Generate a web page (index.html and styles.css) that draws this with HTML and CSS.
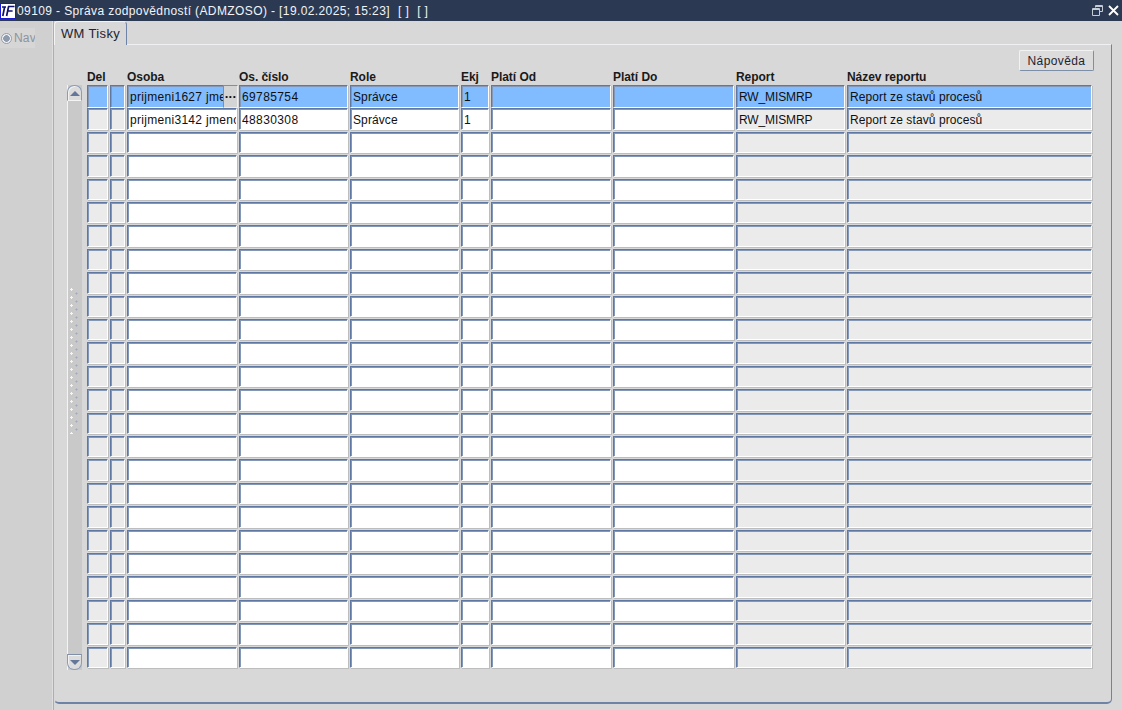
FILE: index.html
```html
<!DOCTYPE html>
<html lang="cs">
<head>
<meta charset="utf-8">
<title>09109 - Správa zodpovědností</title>
<link rel="stylesheet" href="styles.css">
</head>
<body>
<div class="app">
  <header class="titlebar">
    <svg class="logo" width="16" height="16" viewBox="0 0 16 16"><rect x="0.5" y="0.5" width="15" height="15" fill="#fff" stroke="#1a1ad0"/><path d="M2 4h4M4.6 4L2.8 13M8 3.5h6.5M8.6 3.5L6.6 13M7.6 8h5" fill="none" stroke="#10106e" stroke-width="1.7"/></svg>
    <span class="title">09109 - Správa zodpovědností (ADMZOSO) - [19.02.2025; 15:23]<span class="bk">[ ]</span><span class="bk">[ ]</span></span>
    <span class="winctl">
      <svg width="11" height="11" viewBox="0 0 11 11"><path d="M3.5 2.5V.5h7v6h-3M.5 3.5h7v7h-7zM.5 4.5h7M3.5 1.5h7" fill="none" stroke="#c4ccd8"/></svg>
      <svg width="11" height="11" viewBox="0 0 11 11"><path d="M1 1l9 9M10 1L1 10" fill="none" stroke="#fff" stroke-width="1.8"/></svg>
    </span>
  </header>
  <div class="content">
    <aside class="nav">
      <div class="navitem"><span class="radio"></span><span class="navlabel">Nav</span></div>
    </aside>
    <main class="main">
      <div class="tabs"><div class="tab">WM Tisky</div></div>
      <section class="panel">
        <div class="toolbar"><button class="help">Nápověda</button></div>
        <div class="heads">
          <span>Del</span><span></span><span>Osoba</span><span>Os. číslo</span><span>Role</span><span>Ekj</span><span>Platí Od</span><span>Platí Do</span><span>Report</span><span>Název reportu</span>
        </div>
        <div class="tablewrap">
          <div class="scroll">
            <div class="sbtn up"><svg width="10" height="5" viewBox="0 0 10 5"><path d="M5 0l5 5H0z" fill="#64769a"/></svg></div>
            <div class="grip"></div>
            <div class="sbtn down"><svg width="10" height="5" viewBox="0 0 10 5"><path d="M5 5L0 0h10z" fill="#64769a"/></svg></div>
          </div>
          <div class="rows">
            <div class="row sel"><i class="c"></i><i class="c"></i><div class="c lov"><span class="t">prijmeni1627 jmeno</span><b class="dots">···</b></div><div class="c wide">69785754</div><div class="c">Správce</div><div class="c">1</div><i class="c"></i><i class="c"></i><div class="c code">RW_MISMRP</div><div class="c">Report ze stavů procesů</div></div>
            <div class="row"><i class="c g"></i><i class="c g"></i><div class="c"><span class="t">prijmeni3142 jmeno</span></div><div class="c wide">48830308</div><div class="c">Správce</div><div class="c">1</div><i class="c"></i><i class="c"></i><div class="c g code">RW_MISMRP</div><div class="c g">Report ze stavů procesů</div></div>
            <div class="row"><i class="c g"></i><i class="c g"></i><i class="c"></i><i class="c"></i><i class="c"></i><i class="c"></i><i class="c"></i><i class="c"></i><i class="c g"></i><i class="c g"></i></div>
            <div class="row"><i class="c g"></i><i class="c g"></i><i class="c"></i><i class="c"></i><i class="c"></i><i class="c"></i><i class="c"></i><i class="c"></i><i class="c g"></i><i class="c g"></i></div>
            <div class="row"><i class="c g"></i><i class="c g"></i><i class="c"></i><i class="c"></i><i class="c"></i><i class="c"></i><i class="c"></i><i class="c"></i><i class="c g"></i><i class="c g"></i></div>
            <div class="row"><i class="c g"></i><i class="c g"></i><i class="c"></i><i class="c"></i><i class="c"></i><i class="c"></i><i class="c"></i><i class="c"></i><i class="c g"></i><i class="c g"></i></div>
            <div class="row"><i class="c g"></i><i class="c g"></i><i class="c"></i><i class="c"></i><i class="c"></i><i class="c"></i><i class="c"></i><i class="c"></i><i class="c g"></i><i class="c g"></i></div>
            <div class="row"><i class="c g"></i><i class="c g"></i><i class="c"></i><i class="c"></i><i class="c"></i><i class="c"></i><i class="c"></i><i class="c"></i><i class="c g"></i><i class="c g"></i></div>
            <div class="row"><i class="c g"></i><i class="c g"></i><i class="c"></i><i class="c"></i><i class="c"></i><i class="c"></i><i class="c"></i><i class="c"></i><i class="c g"></i><i class="c g"></i></div>
            <div class="row"><i class="c g"></i><i class="c g"></i><i class="c"></i><i class="c"></i><i class="c"></i><i class="c"></i><i class="c"></i><i class="c"></i><i class="c g"></i><i class="c g"></i></div>
            <div class="row"><i class="c g"></i><i class="c g"></i><i class="c"></i><i class="c"></i><i class="c"></i><i class="c"></i><i class="c"></i><i class="c"></i><i class="c g"></i><i class="c g"></i></div>
            <div class="row"><i class="c g"></i><i class="c g"></i><i class="c"></i><i class="c"></i><i class="c"></i><i class="c"></i><i class="c"></i><i class="c"></i><i class="c g"></i><i class="c g"></i></div>
            <div class="row"><i class="c g"></i><i class="c g"></i><i class="c"></i><i class="c"></i><i class="c"></i><i class="c"></i><i class="c"></i><i class="c"></i><i class="c g"></i><i class="c g"></i></div>
            <div class="row"><i class="c g"></i><i class="c g"></i><i class="c"></i><i class="c"></i><i class="c"></i><i class="c"></i><i class="c"></i><i class="c"></i><i class="c g"></i><i class="c g"></i></div>
            <div class="row"><i class="c g"></i><i class="c g"></i><i class="c"></i><i class="c"></i><i class="c"></i><i class="c"></i><i class="c"></i><i class="c"></i><i class="c g"></i><i class="c g"></i></div>
            <div class="row"><i class="c g"></i><i class="c g"></i><i class="c"></i><i class="c"></i><i class="c"></i><i class="c"></i><i class="c"></i><i class="c"></i><i class="c g"></i><i class="c g"></i></div>
            <div class="row"><i class="c g"></i><i class="c g"></i><i class="c"></i><i class="c"></i><i class="c"></i><i class="c"></i><i class="c"></i><i class="c"></i><i class="c g"></i><i class="c g"></i></div>
            <div class="row"><i class="c g"></i><i class="c g"></i><i class="c"></i><i class="c"></i><i class="c"></i><i class="c"></i><i class="c"></i><i class="c"></i><i class="c g"></i><i class="c g"></i></div>
            <div class="row"><i class="c g"></i><i class="c g"></i><i class="c"></i><i class="c"></i><i class="c"></i><i class="c"></i><i class="c"></i><i class="c"></i><i class="c g"></i><i class="c g"></i></div>
            <div class="row"><i class="c g"></i><i class="c g"></i><i class="c"></i><i class="c"></i><i class="c"></i><i class="c"></i><i class="c"></i><i class="c"></i><i class="c g"></i><i class="c g"></i></div>
            <div class="row"><i class="c g"></i><i class="c g"></i><i class="c"></i><i class="c"></i><i class="c"></i><i class="c"></i><i class="c"></i><i class="c"></i><i class="c g"></i><i class="c g"></i></div>
            <div class="row"><i class="c g"></i><i class="c g"></i><i class="c"></i><i class="c"></i><i class="c"></i><i class="c"></i><i class="c"></i><i class="c"></i><i class="c g"></i><i class="c g"></i></div>
            <div class="row"><i class="c g"></i><i class="c g"></i><i class="c"></i><i class="c"></i><i class="c"></i><i class="c"></i><i class="c"></i><i class="c"></i><i class="c g"></i><i class="c g"></i></div>
            <div class="row"><i class="c g"></i><i class="c g"></i><i class="c"></i><i class="c"></i><i class="c"></i><i class="c"></i><i class="c"></i><i class="c"></i><i class="c g"></i><i class="c g"></i></div>
            <div class="row"><i class="c g"></i><i class="c g"></i><i class="c"></i><i class="c"></i><i class="c"></i><i class="c"></i><i class="c"></i><i class="c"></i><i class="c g"></i><i class="c g"></i></div>
          </div>
        </div>
      </section>
    </main>
  </div>
</div>
</body>
</html>
```
FILE: styles.css
```css
* { box-sizing: border-box; }
html, body { margin: 0; height: 100%; overflow: hidden; }
body { font: 12px "Liberation Sans", Arial, sans-serif; color: #000; background: #d8d8d8; }
.app { width: 1122px; height: 710px; display: flex; flex-direction: column; }

.titlebar { height: 21px; flex: none; display: flex; align-items: center; background: #2b3a52; color: #fff; }
.logo { margin-right: 1px; flex: none; }
.title { font-size: 12px; letter-spacing: 0.39px; white-space: pre; flex: 1; color: #f2f4f8; }
.bk { margin-left: 8px; }
.winctl { display: flex; gap: 5px; padding-right: 3px; align-items: center; }

.content { flex: 1; display: flex; min-height: 0; }
.nav { width: 53px; flex: none; background: #d0d0d0; padding-top: 7px; border-right: 1px solid #dedede; }
.navitem { display: flex; align-items: center; width: 35px; height: 20px; background: #d6d6d6; overflow: hidden; padding-left: 1px; }
.radio { width: 11px; height: 11px; border-radius: 50%; flex: none; background: radial-gradient(circle, #8f9bac 0 3px, #eef0f3 3.6px); border: 1px solid #939eae; }
.navlabel { margin-left: 2px; color: #8b94a0; letter-spacing: 0.2px; }

.main { flex: 1; display: flex; flex-direction: column; padding-right: 10px; padding-bottom: 6px; min-width: 0; border-left: 1px solid #9fb0c8; }
.tabs { height: 23px; flex: none; display: flex; position: relative; z-index: 1; }
.tab { height: 24px; padding: 4px 6px 0 6px; background: #d8d8d8; border: 1px solid #f4f4f4; border-bottom: none; border-right: 1px solid #6f83a6; border-radius: 4px 4px 0 0; font-size: 13px; letter-spacing: 0.35px; color: #1c2430; }

.panel { flex: 1; display: flex; flex-direction: column; border: 1px solid #eef0f4; border-right: 1px solid #6f83a6; border-bottom: 2px solid #6f83a6; border-left-color: #d8d8d8; border-radius: 0 0 5px 5px; padding: 5px 17px 0 12px; background: #d8d8d8; min-height: 0; }

.toolbar { display: flex; justify-content: flex-end; height: 20px; flex: none; }
.help { width: 75px; height: 21px; padding: 0; font: 12px "Liberation Sans", Arial, sans-serif; letter-spacing: 0.4px; background: #dcdcdc; color: #1c2430; border: 1px solid #7d8ea8; border-top-color: #f2f2f2; border-left-color: #f2f2f2; border-radius: 2px; }

.heads { height: 15px; flex: none; display: grid; margin-left: 20px; grid-template-columns: 23px 17px 112px 111px 111px 30px 122px 123px 111px 247px; font-weight: bold; font-size: 12px; line-height: 14px; color: #1a1a1a; letter-spacing: -0.05px; }
.heads span { white-space: nowrap; }

.tablewrap { display: flex; height: 585px; flex: none; }
.scroll { width: 15px; margin-right: 5px; flex: none; display: flex; flex-direction: column; align-items: stretch; justify-content: space-between; background: #c9c9c9; border-left: 1px solid #f4f4f4; position: relative; }
.sbtn { height: 16px; width: 15px; margin-left: -1px; background: #dcdcdc; border: 1px solid #8c9cb4; display: flex; align-items: center; justify-content: center; box-shadow: inset 1px 1px 0 #f2f2f2; }
.sbtn.up { border-radius: 7px 7px 0 0; border-bottom-color: #f4f4f4; }
.sbtn.down { border-radius: 0 0 7px 7px; border-top-color: #7f8fa8; }
.grip { position: absolute; top: 203px; left: 2px; width: 10px; height: 146px;
  background-image: radial-gradient(circle at 1.5px 1.5px, #f4f6f9 0 1px, transparent 1.4px), radial-gradient(circle at 1.5px 1.5px, #9aa8bc 0 .8px, transparent 1.2px);
  background-size: 10px 8px, 10px 8px; background-position: 0 0, 5px 4px; }

.rows { flex: none; width: 1007px; display: grid; grid-template-rows: repeat(25, 1fr); }
.row { display: grid; grid-template-columns: 23px 17px 112px 111px 111px 30px 122px 123px 111px 247px; min-height: 0; }
.c { display: block; min-width: 0; font-style: normal; background: #fff; border-style: solid; border-width: 1px; border-color: #5f78a3 #fff #fff #5f78a3; box-shadow: 1px 1px 0 #bdbdbd, inset 1px 1px 0 #8398b8; margin: 0 2px 2px 0; padding: 2px 0 0 2px; line-height: 19px; overflow: hidden; white-space: nowrap; color: #101010; letter-spacing: 0.1px; position: relative; }
.c.g { background: #ebebeb; }
.sel .c { background: #80bcff; }
.wide { letter-spacing: 0.38px; }
.code { letter-spacing: -0.12px; }
.t { letter-spacing: 0.3px; }
.lov { padding-right: 13px; overflow: visible; }
.lov .t { display: block; overflow: hidden; }
.dots { position: absolute; right: -2px; top: -1px; bottom: -1px; width: 15px; background: #d4d4d4; border: 1px solid #7d8ea8; border-right-color: #eee; border-bottom-color: #eee; font-weight: bold; font-size: 13px; text-align: center; line-height: 21px; letter-spacing: -0.5px; color: #111; }
```
